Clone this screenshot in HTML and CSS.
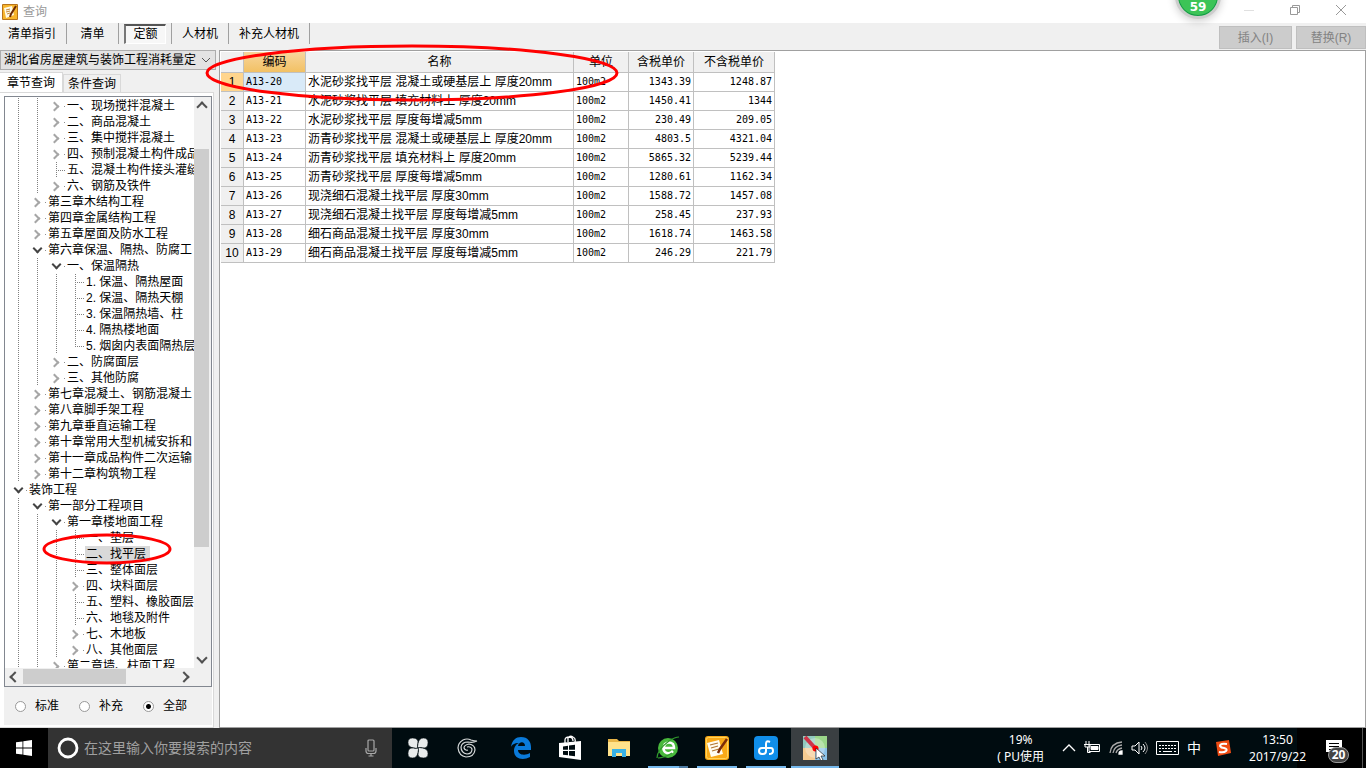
FILE: index.html
```html
<!DOCTYPE html>
<html lang="zh-CN">
<head>
<meta charset="utf-8">
<title>查询</title>
<link rel="stylesheet" href="styles.css">
</head>
<body>
<header class="titlebar">
  <svg class="app-icon" viewBox="0 0 16 16"><rect width="16" height="16" rx="1" fill="#b8741a"/><rect x="1" y="1" width="14" height="14" fill="#f7b52c"/><path d="M2 4l8-2 2 9-8 3z" fill="#fffbe8"/><path d="M4 6l4-1M4 8l4-1M5 10l3-1" stroke="#c58a3c" fill="none"/><path d="M14 2L9 10l-1 3" stroke="#6b2a05" stroke-width="2" fill="none"/></svg>
  <h1>查询</h1>
  <div class="window-controls">
    <button title="最小化"><svg viewBox="0 0 12 12"><path d="M1 6.500h10" stroke="#e0e0e0"/></svg></button>
    <button title="还原"><svg viewBox="0 0 12 12"><path d="M1.500 3.500h7v7h-7zM3.500 3.500v-2h7v7h-2" stroke="#999"/></svg></button>
    <button title="关闭"><svg viewBox="0 0 12 12"><path d="M1 1l10 10M11 1L1 11" stroke="#999"/></svg></button>
  </div>
</header>
<nav class="toolbar">
  <div class="modes">
    <div class="mode"><button>清单指引</button></div>
    <div class="mode"><button>清单</button></div>
    <div class="mode"><button class="pressed">定额</button></div>
    <div class="mode"><button>人材机</button></div>
    <div class="mode"><button>补充人材机</button></div>
  </div>
  <div class="actions"><button disabled>插入(I)</button><button disabled>替换(R)</button></div>
</nav>
<main class="workspace">
  <aside class="sidebar">
    <div class="library">
      <select title="定额库"><option>湖北省房屋建筑与装饰工程消耗量定</option></select>
      <svg viewBox="0 0 10 6"><path d="M1 1l4 4 4-4" fill="none" stroke="#555"/></svg>
    </div>
    <div class="tabs"><button class="tab active">章节查询</button><button class="tab">条件查询</button></div>
    <div class="pane">
      <div class="tree-box">
        <div class="tree-view">
          <ul class="tree">
            <li>
              <ul class="line"><li>
                <ul class="line">
                  <li><button class="node"><span>一、现场搅拌混凝土</span></button></li>
                  <li><button class="node"><span>二、商品混凝土</span></button></li>
                  <li><button class="node"><span>三、集中搅拌混凝土</span></button></li>
                  <li><button class="node"><span>四、预制混凝土构件成品</span></button></li>
                  <li><button class="leaf"><span>五、混凝土构件接头灌缝</span></button></li>
                  <li><button class="node"><span>六、钢筋及铁件</span></button></li>
                </ul></li>
                <li><button class="node"><span>第三章木结构工程</span></button></li>
                <li><button class="node"><span>第四章金属结构工程</span></button></li>
                <li><button class="node"><span>第五章屋面及防水工程</span></button></li>
                <li><button class="node open"><span>第六章保温、隔热、防腐工</span></button>
                  <ul class="line">
                    <li><button class="node open"><span>一、保温隔热</span></button>
                      <ul class="line">
                        <li><button class="leaf"><span>1. 保温、隔热屋面</span></button></li>
                        <li><button class="leaf"><span>2. 保温、隔热天棚</span></button></li>
                        <li><button class="leaf"><span>3. 保温隔热墙、柱</span></button></li>
                        <li><button class="leaf"><span>4. 隔热楼地面</span></button></li>
                        <li><button class="leaf last"><span>5. 烟囱内表面隔热层</span></button></li>
                      </ul></li>
                    <li><button class="node"><span>二、防腐面层</span></button></li>
                    <li><button class="node"><span>三、其他防腐</span></button></li>
                  </ul></li>
                <li><button class="node"><span>第七章混凝土、钢筋混凝土</span></button></li>
                <li><button class="node"><span>第八章脚手架工程</span></button></li>
                <li><button class="node"><span>第九章垂直运输工程</span></button></li>
                <li><button class="node"><span>第十章常用大型机械安拆和</span></button></li>
                <li><button class="node"><span>第十一章成品构件二次运输</span></button></li>
                <li><button class="node"><span>第十二章构筑物工程</span></button></li>
              </ul>
            </li>
            <li><button class="node open"><span>装饰工程</span></button>
              <ul class="line">
                <li><button class="node open"><span>第一部分工程项目</span></button>
                  <ul class="line">
                    <li><button class="node open"><span>第一章楼地面工程</span></button>
                      <ul class="line">
                        <li><button class="leaf"><span>一、垫层</span></button></li>
                        <li><button class="leaf selected"><span>二、找平层</span></button></li>
                        <li><button class="leaf"><span>三、整体面层</span></button></li>
                        <li><button class="node"><span>四、块料面层</span></button></li>
                        <li><button class="leaf"><span>五、塑料、橡胶面层</span></button></li>
                        <li><button class="leaf"><span>六、地毯及附件</span></button></li>
                        <li><button class="node"><span>七、木地板</span></button></li>
                        <li><button class="node"><span>八、其他面层</span></button></li>
                      </ul></li>
                    <li><button class="node"><span>第二章墙、柱面工程</span></button></li>
                  </ul></li>
              </ul></li>
          </ul>
        </div>
        <div class="vscroll"><i class="arrow up"></i><div class="track"><i class="thumb"></i></div><i class="arrow down"></i></div>
        <div class="hscroll"><i class="arrow left"></i><div class="track"><i class="thumb"></i></div><i class="arrow right"></i></div>
      </div>
      <form class="scope">
        <label><input type="radio" name="scope">标准</label>
        <label><input type="radio" name="scope">补充</label>
        <label><input type="radio" name="scope" checked>全部</label>
      </form>
    </div>
  </aside>
  <section class="results">
    <table>
      <colgroup><col class="c-index"><col class="c-code"><col class="c-name"><col class="c-unit"><col class="c-tax"><col class="c-net"></colgroup>
      <thead><tr><th></th><th class="current">编码</th><th>名称</th><th>单位</th><th>含税单价</th><th>不含税单价</th></tr></thead>
      <tbody>
        <tr class="current"><th>1</th><td class="mono">A13-20</td><td>水泥砂浆找平层 混凝土或硬基层上 厚度20mm</td><td class="mono">100m2</td><td class="num">1343.39</td><td class="num">1248.87</td></tr>
        <tr><th>2</th><td class="mono">A13-21</td><td>水泥砂浆找平层 填充材料上 厚度20mm</td><td class="mono">100m2</td><td class="num">1450.41</td><td class="num">1344</td></tr>
        <tr><th>3</th><td class="mono">A13-22</td><td>水泥砂浆找平层 厚度每增减5mm</td><td class="mono">100m2</td><td class="num">230.49</td><td class="num">209.05</td></tr>
        <tr><th>4</th><td class="mono">A13-23</td><td>沥青砂浆找平层 混凝土或硬基层上 厚度20mm</td><td class="mono">100m2</td><td class="num">4803.5</td><td class="num">4321.04</td></tr>
        <tr><th>5</th><td class="mono">A13-24</td><td>沥青砂浆找平层 填充材料上 厚度20mm</td><td class="mono">100m2</td><td class="num">5865.32</td><td class="num">5239.44</td></tr>
        <tr><th>6</th><td class="mono">A13-25</td><td>沥青砂浆找平层 厚度每增减5mm</td><td class="mono">100m2</td><td class="num">1280.61</td><td class="num">1162.34</td></tr>
        <tr><th>7</th><td class="mono">A13-26</td><td>现浇细石混凝土找平层 厚度30mm</td><td class="mono">100m2</td><td class="num">1588.72</td><td class="num">1457.08</td></tr>
        <tr><th>8</th><td class="mono">A13-27</td><td>现浇细石混凝土找平层 厚度每增减5mm</td><td class="mono">100m2</td><td class="num">258.45</td><td class="num">237.93</td></tr>
        <tr><th>9</th><td class="mono">A13-28</td><td>细石商品混凝土找平层 厚度30mm</td><td class="mono">100m2</td><td class="num">1618.74</td><td class="num">1463.58</td></tr>
        <tr><th>10</th><td class="mono">A13-29</td><td>细石商品混凝土找平层 厚度每增减5mm</td><td class="mono">100m2</td><td class="num">246.29</td><td class="num">221.79</td></tr>
      </tbody>
    </table>
  </section>
</main>
<footer class="taskbar">
  <button class="start" title="开始"><svg width="16" height="16" viewBox="0 0 16 16" fill="#fff"><path d="M0 2.300L6.500 1.400V7.600H0zM7.300 1.300L16 0v7.600H7.300zM0 8.400h6.500v6.200L0 13.700zM7.300 8.400H16V16l-8.700-1.300z"/></svg></button>
  <div class="search">
    <svg width="22" height="22" viewBox="0 0 22 22"><circle cx="11" cy="11" r="9" fill="none" stroke="#fff" stroke-width="2.800"/></svg>
    <input type="text" placeholder="在这里输入你要搜索的内容" title="搜索">
    <svg width="12" height="18" viewBox="0 0 12 18" fill="none" stroke="#a8a8a8" stroke-width="1.200"><rect x="3" y="1" width="6" height="11" rx="1"/><path d="M1 9v3q0 2.500 2.500 2.500h5Q11 14.500 11 12V9M6 14.500V17M3.500 17h5"/></svg>
  </div>
  <div class="apps">
    <button title="风扇"><svg width="22" height="22" viewBox="0 0 24 24"><g fill="#e9ecec" stroke="#000c10" stroke-width=".8"><path d="M12 12Q11 13 7 12Q1 11 1 6Q1 1 6 1Q13 1 12 7Q11 9 12 12z"/><path d="M12 12Q11 13 7 12Q1 11 1 6Q1 1 6 1Q13 1 12 7Q11 9 12 12z" transform="rotate(90 12 12)"/><path d="M12 12Q11 13 7 12Q1 11 1 6Q1 1 6 1Q13 1 12 7Q11 9 12 12z" transform="rotate(180 12 12)"/><path d="M12 12Q11 13 7 12Q1 11 1 6Q1 1 6 1Q13 1 12 7Q11 9 12 12z" transform="rotate(270 12 12)"/></g></svg></button>
    <button title="助手"><svg width="22" height="22" viewBox="0 0 22 22" fill="none" stroke="#d8dcdc" stroke-width="1.200"><path d="M21 4Q17 6 12 5Q6 5 5 10Q5 16 11 17Q16 17 16 12Q15 9 11 10M21 4Q18 4 15 3Q11 1 7 3Q2 6 2 11Q3 19 10 20Q18 20 19 13Q19 8 13 7Q8 8 8 11Q9 14 12 13"/></svg></button>
    <button class="gap" title="Edge"><svg width="22" height="22" viewBox="0 0 22 22"><path fill="#0a7ad9" d="M1 10C2 3 6 0 11 0c7 0 10 5 10 10v3H8c0 5 7 6 12 3v4c-7 4-16 2-16-6 0-4 2-7 5-8-5 0-7 2-8 4zm7-1h7c0-5-6-5-7 0z"/></svg></button>
    <button title="商店"><svg width="24" height="26" viewBox="0 0 24 26"><path d="M7 8V5q0-3 4-3 4 0 4 4M10 7V3q2-3 5-1 3 1 2 5" fill="none" stroke="#fff" stroke-width="1.300"/><path fill="#fff" d="M1 8l22-2v19L1 22z"/><path fill="#000c10" d="M5 11.500l5-.7v4H5zM11 10.600l6-.8v5h-6zM5 16h5v4.300l-5-.6zM11 16h6v5.200l-6-.7z"/></svg></button>
    <button title="文件资源管理器"><svg width="22" height="20" viewBox="0 0 22 20"><path fill="#e8b548" d="M0 1h9l2 2h11v6H0z"/><path fill="#ffe28b" d="M0 4h22v14H0z"/><path fill="#38b1e5" d="M4 11h14v8h-4v-4H8v4H4z"/></svg></button>
    <button class="running multi" title="浏览器"><svg width="24" height="24" viewBox="0 0 24 24"><circle cx="12" cy="12" r="10" fill="#48b93c"/><path d="M17 15q-4 4-8 1-3-3 0-8 4-3 8 0 1 2 1 4H8" fill="none" stroke="#fff" stroke-width="2.500"/><path d="M1 22Q1 14 13 5 19 1 23 1M2 22q6 0 14-5" fill="none" stroke="#2f9a2c" stroke-width="1.200"/></svg></button>
    <button class="running" title="计价软件"><svg width="24" height="24" viewBox="0 0 24 24"><rect width="24" height="24" rx="3" fill="#f8a918"/><rect x="1.500" y="1.500" width="21" height="21" rx="2" fill="none" stroke="#ffd45a"/><path d="M2 7l12-3 4 14-12 3z" fill="#fffdf2"/><path d="M5 9l8-2M6 12l7-2M7 15l7-2" stroke="#b27732" stroke-width="1.200"/><path d="M22 3l-7 10-2 4" stroke="#7c2c09" stroke-width="2.500"/></svg></button>
    <button class="running" title="云助手"><svg width="24" height="24" viewBox="0 0 24 24"><rect width="24" height="24" rx="4" fill="#108ee9"/><path d="M16 6Q12 4 12 8V15Q12 18 9 18H8Q5 18 5 15Q5 12 8 12H17Q19 12 19 15Q19 18 15 18" fill="none" stroke="#fff" stroke-width="2"/></svg></button>
    <button class="running active" title="录屏"><svg width="24" height="24" viewBox="0 0 24 24"><path fill="#91c9bd" d="M0 0h12v12H0z"/><path fill="#9bd68a" d="M12 0h12v12H12z"/><path fill="#f5cb91" d="M0 12h12v12H0z"/><path fill="#8bc1e7" d="M12 12h12v12H12z"/><circle cx="12" cy="12" r="10" fill="#fff" opacity=".3"/><path d="M2 1l10 11" stroke="#cf3448" stroke-width="4"/><circle cx="12.500" cy="12.500" r="3" fill="#f00"/><path d="M13 12v11l3-2 2 4 2-1-2-4h4z" fill="#fff" stroke="#222" stroke-width=".7"/></svg></button>
  </div>
  <div class="tray">
    <div class="cpu">19%<br>( PU使用</div>
    <svg width="14" height="8" viewBox="0 0 14 8" fill="none" stroke="#fff" stroke-width="1.300"><path d="M1 7l6-6 6 6"/></svg>
    <svg width="17" height="14" viewBox="0 0 17 14" fill="none" stroke="#fff"><path d="M5 3.500h10.500v7h-10.500zM2 0v3M5 0v3M0 3.500h7M1 4v2h5V4M3.500 6v5.500h3"/><path d="M7 5.500h7v3H7z" fill="#fff"/></svg>
    <svg width="14" height="14" viewBox="0 0 14 14" fill="none" stroke="#aaa" stroke-width="1.300"><path d="M1 12Q2 2 13 1M4 12q1-7 9-8M7 12q1-4 6-5"/><path d="M10 13q0-3 3-3v3z" fill="#fff" stroke="#fff"/></svg>
    <svg width="17" height="14" viewBox="0 0 17 14" fill="none" stroke="#fff"><path d="M1 5h3l4-4v12L4 9H1zM10 5q2 2 0 4M12 3q4 4 0 8"/><path d="M14 1q5 6 0 12" stroke="#888"/></svg>
    <svg width="23" height="14" viewBox="0 0 23 14" fill="none" stroke="#fff"><path d="M.5.500h22v13H.5z"/><path d="M3 4.500h17M3 7.500h17" stroke-dasharray="2 1"/><path d="M3 10.500h2M7 10.500h9M18 10.500h2"/></svg>
    <span class="ime">中</span>
    <svg width="16" height="16" viewBox="0 0 16 16"><path fill="#f04c13" d="M1 2l13-2 2 13-13 3z"/><path d="M12 4Q5 3 5 6q1 2 4 2 4 1 2 3-2 2-7 1" fill="none" stroke="#fff" stroke-width="2"/></svg>
    <div class="clock">13:50<br>2017/9/22</div>
    <button class="notice" title="通知"><svg width="16" height="16" viewBox="0 0 16 16"><path fill="#fff" d="M0 0h16v12H8l-3 4v-4H0z"/><path d="M3 3.500h10M3 6.500h10M3 9.500h6" stroke="#000"/></svg><span>20</span></button>
  </div>
</footer>
<div class="ball">59</div>
<svg class="mark mark-result" viewBox="0 0 414 58"><ellipse cx="207" cy="29" rx="205" ry="27"/></svg>
<svg class="mark mark-tree" viewBox="0 0 130 32"><ellipse cx="65" cy="16" rx="63" ry="14"/></svg>
</body>
</html>
```
FILE: styles.css
```css
* { box-sizing: border-box; }
body {
  margin: 0;
  height: 100vh;
  display: flex;
  flex-direction: column;
  overflow: hidden;
  position: relative;
  background: #f0f0f0;
  color: #000;
  font: 12px/16px "Liberation Sans", "Noto Sans CJK SC", sans-serif;
}
button, input, select { font: inherit; color: inherit; }
button { border: 0; padding: 0; background: none; }
svg { display: block; flex: none; }
ul { list-style: none; margin: 0; padding: 0; }

.titlebar { height: 23px; flex: none; display: flex; align-items: center; padding-left: 2px; background: #fff; }
.app-icon { width: 16px; height: 16px; }
.titlebar h1 { margin: 0 0 0 5px; font-size: 12px; font-weight: 400; color: #999; }
.window-controls { display: flex; margin-left: auto; padding: 0 2px 3px 0; }
.window-controls button { width: 46px; display: grid; place-items: center; }
.window-controls svg { width: 12px; height: 12px; fill: none; }

.toolbar { height: 27px; flex: none; display: flex; justify-content: space-between; }
.modes { display: flex; height: 21px; }
.mode { display: flex; align-items: center; padding: 0 5px; border-right: 1px solid #a0a0a0; }
.mode:first-child { padding-left: 3px; }
.mode button { min-width: 41px; height: 20px; padding: 0 5px; }
.mode .pressed { width: 42px; border: 1px solid #fff; border-top: 2px solid #555; border-left: 2px solid #777; background: #f7f7f7; }
.actions { display: flex; gap: 4px; padding-top: 3px; }
.actions button { width: 73px; height: 23px; border: 1px solid #bfbfbf; background: #ccc; color: #838383; }
.actions button:last-child { width: 70px; }

.workspace { flex: 1; min-height: 0; display: flex; gap: 3px; }
.sidebar { width: 216px; flex: none; display: flex; flex-direction: column; }
.library { display: flex; align-items: center; height: 20px; background: #e3e3e3; border: 1px solid #adadad; padding-right: 4px; }
.library select { flex: 1; min-width: 0; appearance: none; border: 0; padding: 0 0 0 3px; background: none; }
.library svg { width: 10px; height: 6px; }
.tabs { display: flex; align-items: flex-end; height: 22px; padding-top: 2px; }
.tab { height: 18px; padding: 0 4px; border: 1px solid #d9d9d9; border-bottom: 0; }
.tab.active { height: 20px; padding: 0 7px; background: #fff; border-left: 0; }
.pane { flex: 1; min-height: 0; display: flex; flex-direction: column; margin-right: 2px; padding: 3px 1px 2px 4px; background: #fff; border: 1px solid #d9d9d9; border-width: 1px 1px 1px 0; }
.tree-box { flex: 1; min-height: 0; display: grid; grid-template: minmax(0, 1fr) 18px / minmax(0, 1fr) 17px; border: 1px solid #828790; background: #fff; }
.tree-view { overflow: hidden; padding: 1px 0 0 4px; }
.tree ul { padding-left: 19px; }
.tree .line { background: repeating-linear-gradient(#808080 0 1px, transparent 1px 2px) 9px 0 / 1px 100% no-repeat; }
.tree button { display: flex; align-items: center; height: 16px; white-space: nowrap; }
.tree button::before { content: ""; flex: none; box-sizing: border-box; }
.tree button span { padding: 0 4px 0 1px; line-height: 16px; }
.node { background: linear-gradient(#a0a0a0, #a0a0a0) 17px 8px / 1px 1px no-repeat; }
.tree .node { background: linear-gradient(#909090, #909090) 17px 8px / 1px 1px no-repeat; }
.node::before { width: 7px; height: 7px; margin: 0 8px 0 4px; border: solid #a6a6a6; border-width: 2px 2px 0 0; transform: rotate(45deg); }
.node.open::before { margin: 0 6px 3px 6px; border-color: #444; transform: rotate(135deg); }
.leaf::before {
  width: 19px; height: 16px;
  background:
    repeating-linear-gradient(#808080 0 1px, transparent 1px 2px) 9px 0 / 1px 16px no-repeat,
    repeating-linear-gradient(90deg, #808080 0 1px, transparent 1px 2px) 9px 8px / 9px 1px no-repeat;
}
.leaf.last::before { background-size: 1px 8px, 9px 1px; }
.selected span { background: #d9d9d9; }

.vscroll, .hscroll { display: flex; background: #f0f0f0; }
.vscroll { flex-direction: column; padding-right: 2px; }
.hscroll { grid-column: 1 / 3; padding: 1px 19px 2px 1px; }
.arrow { flex: 0 0 17px; display: grid; place-items: center; }
.vscroll .arrow { flex-basis: 20px; }
.arrow::before { content: ""; width: 6px; height: 6px; border: solid #505050; border-width: 2px 2px 0 0; }
.up::before { transform: rotate(-45deg); }
.down::before { transform: rotate(135deg); }
.left::before { transform: rotate(-135deg); }
.right::before { transform: rotate(45deg); }
.track { flex: 1; display: flex; }
.vscroll .track { flex-direction: column; }
.thumb { background: #cdcdcd; }
.vscroll .thumb { height: 75%; margin-top: 32px; }
.hscroll .thumb { width: 68%; }
.scope { flex: none; display: flex; align-items: center; gap: 20px; height: 38px; padding: 0 11px; background: #f0f0f0; }
.scope label { display: flex; align-items: center; gap: 9px; }
.scope input { appearance: none; width: 11px; height: 11px; margin: 0; border: 1px solid #999; border-radius: 50%; background: #fff; }
.scope input:checked { background: radial-gradient(circle, #000 0 2px, #fff 3px); }

.results { flex: 1; min-width: 0; padding: 1px; background: #fff; border: 1px solid #a0a0a0; }
table { table-layout: fixed; width: 554px; border-collapse: separate; border-spacing: 0; white-space: nowrap; }
.c-index { width: 23px; }
.c-code { width: 62px; }
.c-name { width: 268px; }
.c-unit { width: 55px; }
.c-tax { width: 65px; }
.c-net { width: 81px; }
th, td { height: 19px; padding: 0 2px; border: solid #c0c0c0; border-width: 0 1px 1px 0; line-height: 18px; }
th { background: #f0f0f0; font-weight: 400; }
thead th { height: 21px; }
tbody th { padding: 0; }
thead .current { background: linear-gradient(#f8d59c, #f2c164); }
tbody .current th { background: #ffd58d; }
.current td:nth-child(2) { background: #d9eaf8; }
.mono, .num { font-family: "DejaVu Sans Mono", monospace; font-size: 10px; }
.num { text-align: right; }

.taskbar { height: 40px; flex: none; display: flex; color: #fff; background: linear-gradient(90deg, #000c10 calc(100% - 69px), #000 calc(100% - 69px)); }
.taskbar button { display: grid; place-items: center; }
.start { width: 48px; background: #000; }
.search { width: 344px; display: flex; align-items: center; gap: 5px; padding: 0 15px 0 9px; background: #333; }
.search input { flex: 1; min-width: 0; border: 0; padding: 0; background: none; font-size: 14px; }
.search input::placeholder { color: #a0a0a0; opacity: 1; }
.apps { display: flex; gap: 1px; padding-left: 2px; }
.apps button { width: 48px; }
.apps .gap { margin-left: 5px; }
.running { background: linear-gradient(#76b9ed, #76b9ed) center bottom / 40px 2px no-repeat; }
.running.multi { background: linear-gradient(90deg, #76b9ed 31px, #4d7ba3 31px) center bottom / 40px 2px no-repeat; }
.running.active { background: linear-gradient(#76b9ed, #76b9ed) bottom / 48px 2px no-repeat, #3a3f42; }
.tray { margin-left: auto; display: flex; align-items: center; gap: 8px; padding-right: 3px; }
.cpu, .clock { font: 12px/17px "Noto Sans", "Noto Sans CJK SC", sans-serif; text-align: center; }
.cpu { margin-right: 10px; }
.clock { margin: 0 7px 0 10px; }
.ime { margin-right: 6px; font-size: 14px; }
.tray .notice { width: 42px; height: 40px; border-right: 1px solid #555; position: relative; padding-right: 16px; }
.notice span { position: absolute; left: 7px; top: 19px; width: 21px; height: 16px; border: 1px solid #999; border-radius: 8px; background: #444; font: 700 12px/14px "Noto Sans", sans-serif; }

.ball { position: absolute; right: 145px; top: -27px; width: 46px; height: 46px; padding-top: 23px; border: 3px solid #ccc; border-radius: 50%; background: #3cc457; box-shadow: inset 0 0 0 1px #159a48, 0 2px 8px #0003; color: #fff; font: 700 12px/16px "DejaVu Sans", sans-serif; text-align: center; }
.mark { position: absolute; fill: none; stroke: #f00; stroke-width: 3px; pointer-events: none; }
.mark-result { left: 205px; top: 44px; width: 414px; height: 58px; }
.mark-tree { left: 42px; top: 533px; width: 130px; height: 32px; }
```
